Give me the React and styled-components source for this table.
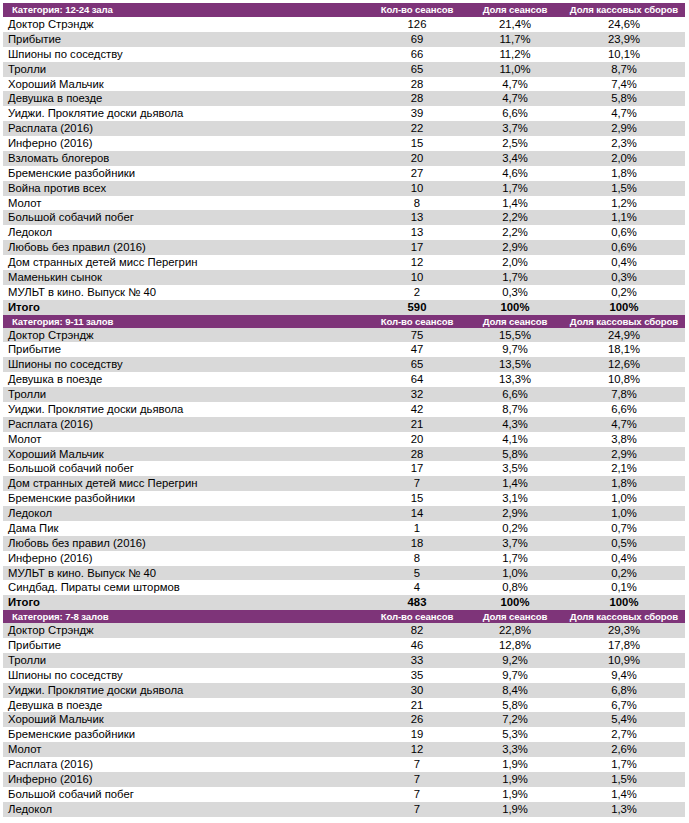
import React from "react";
import styled, { createGlobalStyle } from "styled-components";

const Global = createGlobalStyle`
  html, body { margin: 0; padding: 0; background: #ffffff; }
  body { font-family: "Liberation Sans", Arial, sans-serif; }
`;

const Page = styled.div`
  padding: 3px 4px 0 3px;
  width: 682px;
`;

const Table = styled.div`
  display: flex;
  flex-direction: column;
`;

const cols = "364px 100px 96px 122px";

const HeadRow = styled.div`
  display: grid;
  grid-template-columns: ${cols};
  height: ${(p) => p.$h}px;
  background: #7e3479;
  color: #ffffff;
  font-weight: bold;
  font-size: 9.6px;
  line-height: ${(p) => p.$h}px;
  letter-spacing: -0.1px;
`;

const Row = styled.div`
  display: grid;
  grid-template-columns: ${cols};
  height: 14.88px;
  line-height: 15.4px;
  background: ${(p) => (p.$gray ? "#d9d9d9" : "#ffffff")};
  color: #000000;
  font-size: 11.3px;
  font-weight: ${(p) => (p.$bold ? "bold" : "normal")};
  white-space: nowrap;
`;

const NameCell = styled.div`
  padding-left: ${(p) => (p.$head ? 9 : 5)}px;
  overflow: hidden;
`;

const NumCell = styled.div`
  text-align: center;
`;

const sections = [
  {
    title: "Категория: 12-24 зала",
    h: 14,
    rows: [
      ["Доктор Стрэндж", "126", "21,4%", "24,6%"],
      ["Прибытие", "69", "11,7%", "23,9%"],
      ["Шпионы по соседству", "66", "11,2%", "10,1%"],
      ["Тролли", "65", "11,0%", "8,7%"],
      ["Хороший Мальчик", "28", "4,7%", "7,4%"],
      ["Девушка в поезде", "28", "4,7%", "5,8%"],
      ["Уиджи. Проклятие доски дьявола", "39", "6,6%", "4,7%"],
      ["Расплата (2016)", "22", "3,7%", "2,9%"],
      ["Инферно (2016)", "15", "2,5%", "2,3%"],
      ["Взломать блогеров", "20", "3,4%", "2,0%"],
      ["Бременские разбойники", "27", "4,6%", "1,8%"],
      ["Война против всех", "10", "1,7%", "1,5%"],
      ["Молот", "8", "1,4%", "1,2%"],
      ["Большой собачий побег", "13", "2,2%", "1,1%"],
      ["Ледокол", "13", "2,2%", "0,6%"],
      ["Любовь без правил (2016)", "17", "2,9%", "0,6%"],
      ["Дом странных детей мисс Перегрин", "12", "2,0%", "0,4%"],
      ["Маменькин сынок", "10", "1,7%", "0,3%"],
      ["МУЛЬТ в кино. Выпуск № 40", "2", "0,3%", "0,2%"],
    ],
    total: ["Итого", "590", "100%", "100%"],
  },
  {
    title: "Категория: 9-11 залов",
    h: 13,
    rows: [
      ["Доктор Стрэндж", "75", "15,5%", "24,9%"],
      ["Прибытие", "47", "9,7%", "18,1%"],
      ["Шпионы по соседству", "65", "13,5%", "12,6%"],
      ["Девушка в поезде", "64", "13,3%", "10,8%"],
      ["Тролли", "32", "6,6%", "7,8%"],
      ["Уиджи. Проклятие доски дьявола", "42", "8,7%", "6,6%"],
      ["Расплата (2016)", "21", "4,3%", "4,7%"],
      ["Молот", "20", "4,1%", "3,8%"],
      ["Хороший Мальчик", "28", "5,8%", "2,9%"],
      ["Большой собачий побег", "17", "3,5%", "2,1%"],
      ["Дом странных детей мисс Перегрин", "7", "1,4%", "1,8%"],
      ["Бременские разбойники", "15", "3,1%", "1,0%"],
      ["Ледокол", "14", "2,9%", "1,0%"],
      ["Дама Пик", "1", "0,2%", "0,7%"],
      ["Любовь без правил (2016)", "18", "3,7%", "0,5%"],
      ["Инферно (2016)", "8", "1,7%", "0,4%"],
      ["МУЛЬТ в кино. Выпуск № 40", "5", "1,0%", "0,2%"],
      ["Синдбад. Пираты семи штормов", "4", "0,8%", "0,1%"],
    ],
    total: ["Итого", "483", "100%", "100%"],
  },
  {
    title: "Категория: 7-8 залов",
    h: 13,
    rows: [
      ["Доктор Стрэндж", "82", "22,8%", "29,3%"],
      ["Прибытие", "46", "12,8%", "17,8%"],
      ["Тролли", "33", "9,2%", "10,9%"],
      ["Шпионы по соседству", "35", "9,7%", "9,4%"],
      ["Уиджи. Проклятие доски дьявола", "30", "8,4%", "6,8%"],
      ["Девушка в поезде", "21", "5,8%", "6,7%"],
      ["Хороший Мальчик", "26", "7,2%", "5,4%"],
      ["Бременские разбойники", "19", "5,3%", "2,7%"],
      ["Молот", "12", "3,3%", "2,6%"],
      ["Расплата (2016)", "7", "1,9%", "1,7%"],
      ["Инферно (2016)", "7", "1,9%", "1,5%"],
      ["Большой собачий побег", "7", "1,9%", "1,4%"],
      ["Ледокол", "7", "1,9%", "1,3%"],
    ],
    total: null,
  },
];

export default function App() {
  let idx = 0;
  const out = [];
  sections.forEach((s, si) => {
    idx++;
    out.push(
      <HeadRow key={`h${si}`} $h={s.h}>
        <NameCell $head>{s.title}</NameCell>
        <NumCell>Кол-во сеансов</NumCell>
        <NumCell>Доля сеансов</NumCell>
        <NumCell>Доля кассовых сборов</NumCell>
      </HeadRow>
    );
    const all = s.total ? [...s.rows, s.total] : s.rows;
    all.forEach((r, ri) => {
      const gray = idx % 2 === 0;
      idx++;
      const bold = s.total && ri === all.length - 1;
      out.push(
        <Row key={`r${si}-${ri}`} $gray={gray} $bold={bold}>
          <NameCell>{r[0]}</NameCell>
          <NumCell>{r[1]}</NumCell>
          <NumCell>{r[2]}</NumCell>
          <NumCell>{r[3]}</NumCell>
        </Row>
      );
    });
  });
  return (
    <>
      <Global />
      <Page>
        <Table>{out}</Table>
      </Page>
    </>
  );
}
